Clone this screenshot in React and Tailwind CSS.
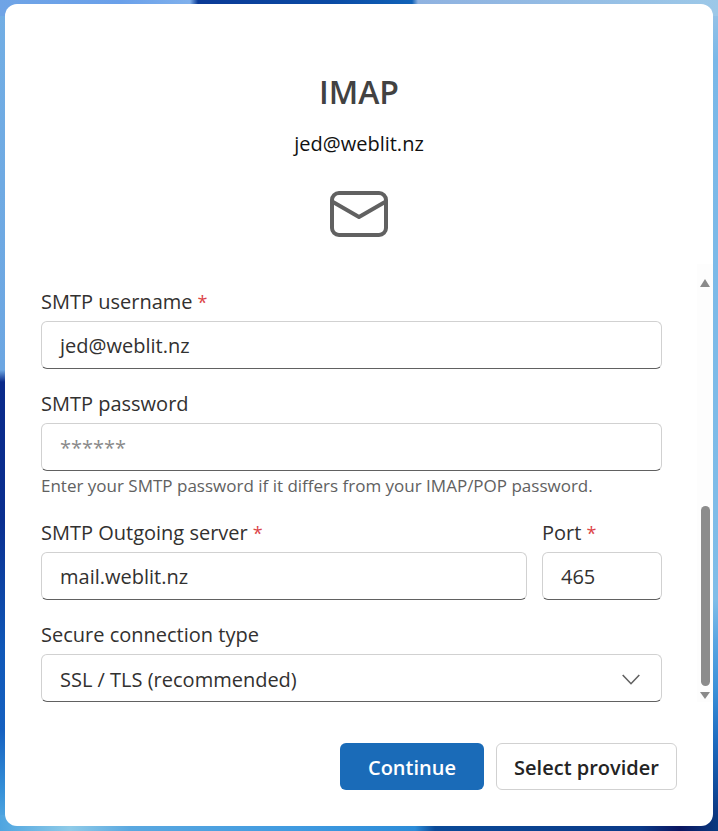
const font = "font-['Open_Sans','Noto_Sans',sans-serif]";

function Label({ children, required }) {
  return (
    <label className="block h-[26px] text-[20px] leading-[26px] text-[#323130] whitespace-nowrap">
      {children}
      {required && <span className="ml-[5px] text-[18px] text-[#dc4448]">*</span>}
    </label>
  );
}

function Box({ children, className = "", muted }) {
  return (
    <div
      className={`flex h-[48px] items-center rounded-[6px] border border-[#d1d1d1] border-b-[#616161] bg-white pl-[18px] pt-[2px] text-[20px] ${muted ? "text-[#8a8a8a]" : "text-[#323130]"} ${className}`}
    >
      {children}
    </div>
  );
}

export default function App() {
  return (
    <div className={`h-[831px] w-[718px] overflow-hidden [background:linear-gradient(90deg,#6fa4e6_0px,#6aa0ea_120px,#7fb0ec_190px,#0a3a96_198px,#0a4aa4_330px,#1062b8_412px,#8fb2e0_418px,#94bce4_560px,#9cc8e8_718px)_top/100%_16px_no-repeat,linear-gradient(90deg,#4fa5e0_0px,#8fcbe8_70px,#5aa8e0_130px,#3f9ae0_300px,#2c8cd8_415px,#0a4a98_435px,#0a3a88_640px,#0a1660_680px,#0a3a80_718px)_bottom/100%_16px_no-repeat,linear-gradient(180deg,#72aee4_0px,#6ca6e2_370px,#0a2a8a_382px,#0a2f90_520px,#1058b8_650px,#1560c0_730px,#3590d8_790px,#5aaee4_831px)_left/16px_100%_no-repeat,linear-gradient(180deg,#9cc4e6_0px,#7ab8e8_60px,#80bde8_600px,#5aa6e2_640px,#3a90d8_690px,#1e6cc0_740px,#0f4a9a_790px,#0a2a70_831px)_right/16px_100%_no-repeat] pb-[5px] pl-[5px] pr-[5px] pt-[4px] ${font}`}>
      <div className="flex h-[822px] flex-col rounded-[12px] bg-white">
        <header className="flex h-[260px] flex-col items-center pt-[66px]">
          <h1 className="text-[32px] font-semibold leading-[44px] text-[#424242]">IMAP</h1>
          <p className="mt-[16px] text-[20px] leading-[28px] text-[#111111]">jed@weblit.nz</p>
          <svg className="mt-[32px]" width="60" height="48" viewBox="0 0 60 48" fill="none" stroke="#616161" strokeWidth="4" strokeLinejoin="round" strokeLinecap="round">
            <rect x="3" y="3" width="54" height="42" rx="7" />
            <path d="M4 12 L30 27 L56 12" />
          </svg>
        </header>

        <div className="flex min-h-0 flex-1">
          <main className="flex-1 pl-[36px] pr-[35px] pt-[25px]">
            <Label required>SMTP username</Label>
            <Box className="mt-[6px]">jed@weblit.nz</Box>
            <div className="mt-[22px]"><Label>SMTP password</Label></div>
            <Box className="mt-[6px]" muted>******</Box>
            <p className="mt-[4px] h-[22px] text-[17px] leading-[22px] text-[#616161] whitespace-nowrap">Enter your SMTP password if it differs from your IMAP/POP password.</p>
            <div className="mt-[23px] flex gap-[15px]">
              <div className="flex-1">
                <Label required>SMTP Outgoing server</Label>
                <Box className="mt-[6px]">mail.weblit.nz</Box>
              </div>
              <div className="w-[120px]">
                <Label required>Port</Label>
                <Box className="mt-[6px]">465</Box>
              </div>
            </div>
            <div className="mt-[22px]"><Label>Secure connection type</Label></div>
            <Box className="mt-[6px] justify-between pr-[21px] pt-[3px]">
              <span>SSL / TLS (recommended)</span>
              <svg width="18" height="11" viewBox="0 0 18 11" fill="none" stroke="#616161" strokeWidth="1.6">
                <path d="M0.7 1 L9 9.7 L17.3 1" />
              </svg>
            </Box>
          </main>

          <aside className="flex h-[438px] w-[16px] shrink-0 flex-col items-center bg-[#fdfdfd]">
            <svg className="mt-[15px] shrink-0" width="10" height="8" viewBox="0 0 10 8"><path d="M5 0 L10 8 L0 8 Z" fill="#8a8a8a" /></svg>
            <div className="mt-[219px] h-[180px] w-[9px] shrink-0 rounded-full bg-[#8c8c8c]" />
            <svg className="mt-[6px] shrink-0" width="10" height="7" viewBox="0 0 10 7"><path d="M0 0 L10 0 L5 7 Z" fill="#8a8a8a" /></svg>
          </aside>
        </div>

        <footer className="flex h-[83px] items-start justify-end gap-[12px] pr-[36px]">
          <button className="h-[47px] w-[144px] rounded-[6px] bg-[#1a6bb8] pt-[2px] text-[20px] font-semibold text-white">Continue</button>
          <button className="h-[47px] w-[181px] rounded-[6px] border border-[#d1d1d1] bg-white pt-[2px] text-[20px] font-semibold text-[#242424]">Select provider</button>
        </footer>
      </div>
    </div>
  );
}
